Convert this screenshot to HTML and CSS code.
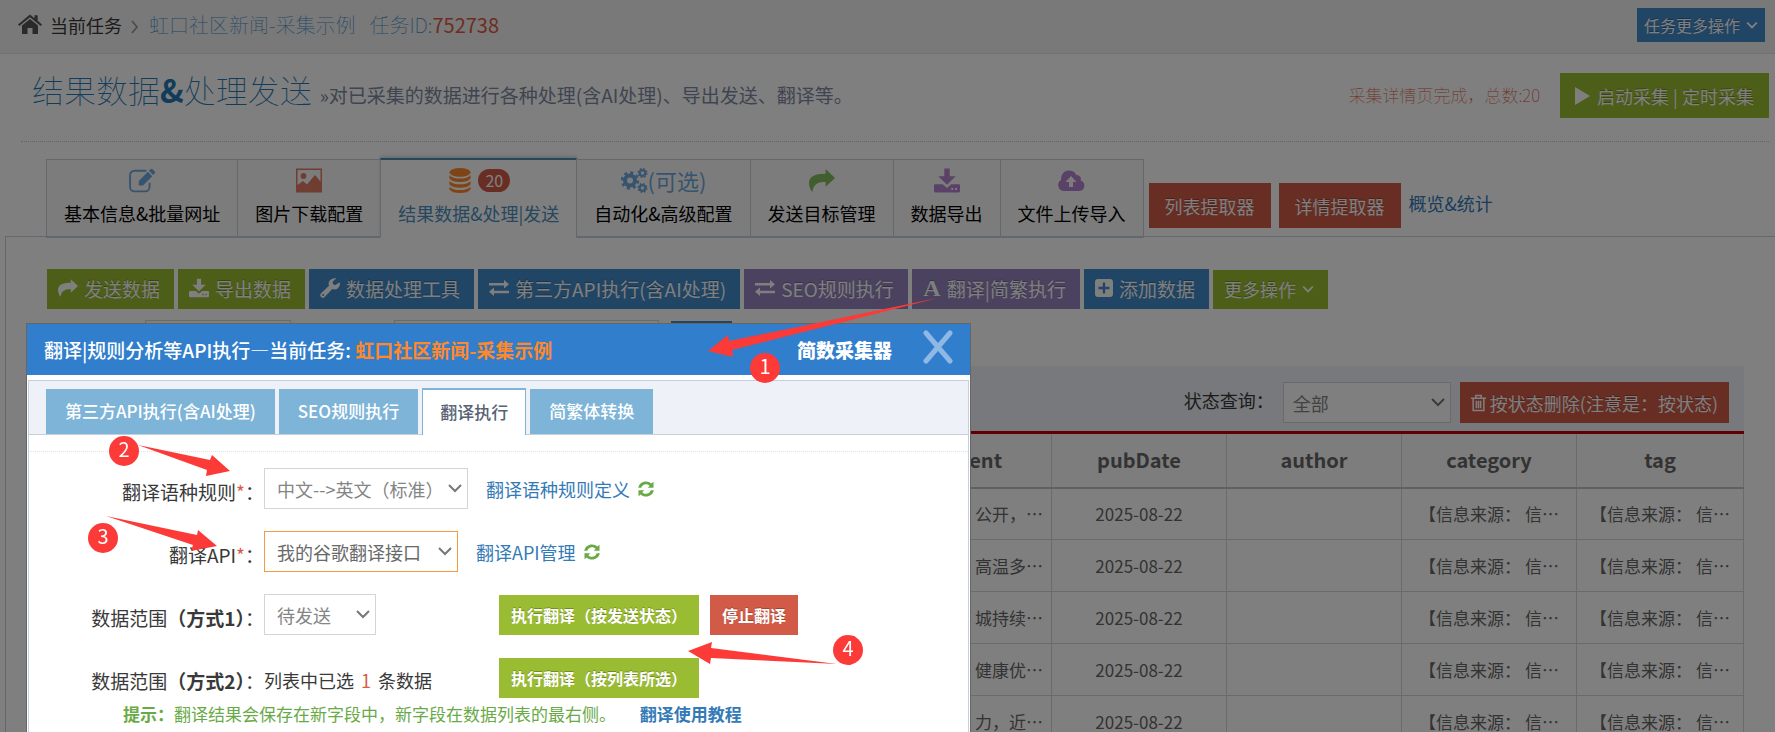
FILE: index.html
```html
<!DOCTYPE html>
<html lang="zh-CN">
<head>
  <meta charset="UTF-8">
  <title>结果数据&amp;处理发送</title>
  <link rel="stylesheet" href="styles.css">
</head>
<body>
  <!-- 图标 -->
  <svg class="sprite" aria-hidden="true">
    <symbol id="i-home" viewBox="0 0 24 20"><path d="M12 4.500 20 11v8.500h-5.500v-6h-5v6H4V11zM12 0l4.500 3.700V.8h3.200v5.500L24 10l-1.300 1.500L12 2.800 1.300 11.500 0 10z"/></symbol>
    <symbol id="i-edit" viewBox="0 0 24 22"><path d="M16 2H5a4 4 0 0 0-4 4v11a4 4 0 0 0 4 4h10a4 4 0 0 0 4-4v-4" fill="none" stroke="currentColor" stroke-width="1.700"/><path d="M9 11.500 17.500 3l4 4-8.500 8.500H9zM18.400 2.100 20 .5q.9-.7 1.800.1l2 2q.7.9 0 1.700L22.300 6z"/></symbol>
    <symbol id="i-image" viewBox="0 0 26 24"><path fill-rule="evenodd" d="M0 0h26v24H0zM1.500 1.500v15L7 12.500l4 3.500 8-9.500 5.500 6.500V1.500z"/><circle cx="7.500" cy="7.500" r="2.900"/></symbol>
    <symbol id="i-db" viewBox="0 0 22 26"><ellipse cx="11" cy="4.500" rx="11" ry="4.500"/><path d="M0 7.500q3.500 3.500 11 3.500t11-3.500v3.300q-3 3.700-11 3.700T0 10.800zM0 13.500q3.500 3.500 11 3.500t11-3.500v3.300q-3 3.700-11 3.700T0 16.800zM0 19.500q3.500 3.500 11 3.500t11-3.500v2.800Q19 26 11 26T0 22.300z"/></symbol>
    <symbol id="i-gears" viewBox="0 0 27 25"><g fill="none" stroke="currentColor"><circle cx="9" cy="12.500" r="5" stroke-width="4"/><circle cx="9" cy="12.500" r="7.900" stroke-width="2.600" stroke-dasharray="3.100 3.100"/><circle cx="21.500" cy="5" r="2.800" stroke-width="2.200"/><circle cx="21.500" cy="5" r="4.300" stroke-width="1.500" stroke-dasharray="1.700 1.700"/><circle cx="21.500" cy="20" r="2.800" stroke-width="2.200"/><circle cx="21.500" cy="20" r="4.300" stroke-width="1.500" stroke-dasharray="1.700 1.700"/></g></symbol>
    <symbol id="i-share" viewBox="0 0 25 22"><path d="M16 0l9 8.500-9 8.500v-4.500C9 12.300 4.500 14 3.200 22 1.500 20.500 0 16.500 0 13.500 0 7 6 4.300 16 4.500z"/></symbol>
    <symbol id="i-download" viewBox="0 0 24 22"><path fill-rule="evenodd" d="M9.500 0h5v7H20l-8 8-8-8h5.500zM1 14.500h7l4 3.500 4-3.500h7q1 0 1 1V21q0 1-1 1H1q-1 0-1-1v-5.500q0-1 1-1zM16 18v1.700h1.700V18zm3.500 0v1.700h1.700V18z"/></symbol>
    <symbol id="i-cloud" viewBox="0 0 27 21"><path fill-rule="evenodd" d="M6 21a6 6 0 0 1-2.800-11.200A8 8 0 0 1 18.300 5a4 4 0 0 1 4.300 5.500A5.400 5.400 0 0 1 21.500 21zM13 6l-5.500 6H11v5h4v-5h3.500z"/></symbol>
    <symbol id="i-wrench" viewBox="0 0 20 20"><path fill-rule="evenodd" d="M19.700 4.200q1 3.500-1.700 6-2.700 2-5.800.9L4.700 19q-1.700 1.700-3.500.1-2-1.900-.1-3.800L9 7.800Q7.800 4.700 10.200 2 13-.6 16.500.5L12.800 3.200v2.500l2.200 1.500zM3.200 16a1 1 0 1 0 0 2 1 1 0 0 0 0-2z"/></symbol>
    <symbol id="i-exchange" viewBox="0 0 20 16"><path d="M0 3h15V0l5 4.200-5 4.200V5.500H0zM20 13.200H5V16l-5-4.200L5 7.600v3.100h15z"/></symbol>
    <symbol id="i-plus" viewBox="0 0 18 18"><path fill-rule="evenodd" d="M3 0h12q3 0 3 3v12q0 3-3 3H3q-3 0-3-3V3q0-3 3-3zM7.800 3.500v4.300H3.500v2.400h4.300v4.300h2.400v-4.300h4.300V7.800h-4.300V3.500z"/></symbol>
    <symbol id="i-trash" viewBox="0 0 14 16"><path d="M0 3.500h14M4.500 3V1h5v2M2 4v11h10V4M5 6v7M7 6v7M9 6v7" fill="none" stroke="currentColor" stroke-width="1.400"/></symbol>
    <symbol id="i-refresh" viewBox="0 0 16 16"><path d="M.2 6.800C1 2.900 4 .5 8 .5c2.100 0 4 .8 5.300 2.100L15.500.8v6H9.700l2-2C10.700 3.700 9.500 3.200 8 3.200c-2.200 0-4 1.300-4.700 3.600zM15.800 9.200C15 13.100 12 15.500 8 15.500c-2.100 0-4-.8-5.300-2.100L.5 15.200v-6h5.800l-2 2c1 1.100 2.200 1.600 3.700 1.600 2.200 0 4-1.300 4.700-3.600z"/></symbol>
    <symbol id="i-down" viewBox="0 0 10 10"><path d="M1 3l4 4 4-4" fill="none" stroke="currentColor" stroke-width="1.500"/></symbol>
    <symbol id="i-right" viewBox="0 0 8 14"><path d="M1 1l5 6-5 6" fill="none" stroke="currentColor" stroke-width="1.800"/></symbol>
    <symbol id="i-play" viewBox="0 0 15 18"><path d="M0 0l15 9-15 9z"/></symbol>
    <symbol id="i-close" viewBox="0 0 30 34"><path d="M3 3l24 28M27 3L3 31" stroke="currentColor" stroke-width="5" stroke-linecap="round"/></symbol>
  </svg>

  <div class="page">
    <div class="topbar">
      <svg class="home"><use href="#i-home"/></svg>
      <span class="crumb">当前任务</span>
      <svg class="sep"><use href="#i-right"/></svg>
      <span class="task">虹口社区新闻-采集示例</span>
      <span class="task-id">任务ID:<b>752738</b></span>
      <button class="btn primary small" type="button">任务更多操作 <svg class="caret"><use href="#i-down"/></svg></button>
    </div>

    <div class="page-header">
      <h1>结果数据<b>&amp;</b>处理发送</h1>
      <span class="sub">»对已采集的数据进行各种处理(含AI处理)、导出发送、翻译等。</span>
      <span class="status">采集详情页完成，总数:20</span>
      <button class="btn success start" type="button"><svg class="play"><use href="#i-play"/></svg>启动采集 | 定时采集</button>
    </div>

    <div class="tabs-row">
      <nav class="tabs">
        <a href="#"><span class="ico blue"><svg class="i24"><use href="#i-edit"/></svg></span>基本信息&amp;批量网址</a>
        <a href="#"><span class="ico pink"><svg class="i24"><use href="#i-image"/></svg></span>图片下载配置</a>
        <a href="#" class="active"><span class="ico orange"><svg class="i24"><use href="#i-db"/></svg><span class="badge">20</span></span>结果数据&amp;处理|发送</a>
        <a href="#"><span class="ico blue"><svg class="i27"><use href="#i-gears"/></svg>(可选)</span>自动化&amp;高级配置</a>
        <a href="#"><span class="ico green"><svg class="i24"><use href="#i-share"/></svg></span>发送目标管理</a>
        <a href="#"><span class="ico purple"><svg class="i24"><use href="#i-download"/></svg></span>数据导出</a>
        <a href="#"><span class="ico purple"><svg class="i27"><use href="#i-cloud"/></svg></span>文件上传导入</a>
      </nav>
      <div class="extra">
        <button class="btn danger big" type="button">列表提取器</button>
        <button class="btn danger big" type="button">详情提取器</button>
        <a href="#">概览&amp;统计</a>
      </div>
    </div>

    <div class="panel">
      <div class="toolbar">
        <button class="btn success" type="button"><svg class="i20"><use href="#i-share"/></svg>发送数据</button>
        <button class="btn success" type="button"><svg class="i20"><use href="#i-download"/></svg>导出数据</button>
        <button class="btn primary" type="button"><svg class="i20"><use href="#i-wrench"/></svg>数据处理工具</button>
        <button class="btn primary" type="button"><svg class="i20"><use href="#i-exchange"/></svg>第三方API执行(含AI处理)</button>
        <button class="btn purple-bg" type="button"><svg class="i20"><use href="#i-exchange"/></svg>SEO规则执行</button>
        <button class="btn purple-bg" type="button"><span class="font-a">A</span>翻译|简繁执行</button>
        <button class="btn primary" type="button"><svg class="i18"><use href="#i-plus"/></svg>添加数据</button>
        <button class="btn success more" type="button">更多操作 <svg class="caret"><use href="#i-down"/></svg></button>
      </div>

      <form class="search">
        <input class="q-field" type="text" aria-label="字段">
        <input class="q-word" type="text" aria-label="关键词">
        <button class="btn primary" type="button" aria-label="查询"></button>
      </form>

      <div class="grid-box">
        <div class="grid-tools">
          <label for="state">状态查询：</label>
          <select id="state"><option>全部</option></select>
          <button class="btn danger del" type="button"><svg class="trash"><use href="#i-trash"/></svg>按状态删除(注意是：按状态)</button>
        </div>
        <table>
          <colgroup><col><col class="c"><col class="c"><col class="c"><col class="c"><col class="t"></colgroup>
          <thead>
            <tr><th></th><th>content</th><th>pubDate</th><th>author</th><th>category</th><th>tag</th></tr>
          </thead>
          <tbody>
            <tr><td></td><td class="r">公开，⋯</td><td>2025-08-22</td><td></td><td>【信息来源： 信⋯</td><td>【信息来源： 信⋯</td></tr>
            <tr><td></td><td class="r">高温多⋯</td><td>2025-08-22</td><td></td><td>【信息来源： 信⋯</td><td>【信息来源： 信⋯</td></tr>
            <tr><td></td><td class="r">城持续⋯</td><td>2025-08-22</td><td></td><td>【信息来源： 信⋯</td><td>【信息来源： 信⋯</td></tr>
            <tr><td></td><td class="r">健康优⋯</td><td>2025-08-22</td><td></td><td>【信息来源： 信⋯</td><td>【信息来源： 信⋯</td></tr>
            <tr><td></td><td class="r">力，近⋯</td><td>2025-08-22</td><td></td><td>【信息来源： 信⋯</td><td>【信息来源： 信⋯</td></tr>
          </tbody>
        </table>
      </div>
    </div>
  </div>

  <div class="mask"></div>

  <!-- 弹窗 -->
  <div class="modal">
    <div class="modal-head">
      <span>翻译|规则分析等API执行—当前任务: <b>虹口社区新闻-采集示例</b></span>
      <strong>简数采集器</strong>
      <button type="button" class="close" aria-label="关闭"><svg><use href="#i-close"/></svg></button>
    </div>
    <div class="modal-body">
      <nav class="subtabs">
        <a href="#">第三方API执行(含AI处理)</a>
        <a href="#">SEO规则执行</a>
        <a href="#" class="active">翻译执行</a>
        <a href="#">简繁体转换</a>
      </nav>
      <form class="form">
        <label for="rule">翻译语种规则<i>*</i>：</label>
        <div class="ctl">
          <select id="rule" class="w-rule"><option>中文--&gt;英文（标准）</option></select>
          <a href="#">翻译语种规则定义<svg class="refresh"><use href="#i-refresh"/></svg></a>
        </div>
        <label for="api">翻译API<i>*</i>：</label>
        <div class="ctl">
          <select id="api" class="w-api"><option>我的谷歌翻译接口</option></select>
          <a href="#">翻译API管理<svg class="refresh"><use href="#i-refresh"/></svg></a>
        </div>
        <label for="range">数据范围<b>（方式1）</b>：</label>
        <div class="ctl">
          <div class="first"><select id="range" class="w-range"><option>待发送</option></select></div>
          <button class="btn success run" type="button">执行翻译（按发送状态）</button>
          <button class="btn danger run" type="button">停止翻译</button>
        </div>
        <span class="label">数据范围<b>（方式2）</b>：</span>
        <div class="ctl">
          <div class="first picked">列表中已选 <em>1</em> 条数据</div>
          <button class="btn success run" type="button">执行翻译（按列表所选）</button>
        </div>
      </form>
      <p class="hint"><b>提示：</b>翻译结果会保存在新字段中，新字段在数据列表的最右侧。 <a href="#">翻译使用教程</a></p>
    </div>
  </div>

  <!-- 步骤标注 -->
  <svg class="steps" width="1775" height="732">
    <path d="M938 298 729 341 728 335 708 351 733 357 732 350z"/>
    <path d="M138 445 210 460 212 455 230 471 206 476 207 470z"/>
    <path d="M106 516 197 535 198 530 217 546 191 551 193 545z"/>
    <path d="M837 664 711 648 712 642 688 651 710 664 711 658z"/>
    <circle cx="765" cy="368" r="15"/>
    <circle cx="124" cy="451" r="15"/>
    <circle cx="103" cy="538" r="15"/>
    <circle cx="848" cy="650" r="15"/>
    <text x="765" y="374">1</text>
    <text x="124" y="457">2</text>
    <text x="103" y="544">3</text>
    <text x="848" y="656">4</text>
  </svg>
</body>
</html>
```
FILE: styles.css
```css
* {
  box-sizing: border-box;
}
body {
  margin: 0;
  height: 100vh;
  overflow: hidden;
  background: #fff;
  color: #393939;
  font-family: "Noto Sans CJK SC", "Noto Sans", sans-serif;
  font-size: 18px;
  line-height: 24px;
}
a {
  color: #337ab7;
  text-decoration: none;
}
svg {
  fill: currentColor;
  flex-shrink: 0;
}
button, select, input {
  font-family: inherit;
  margin: 0;
}
select, input {
  height: 41px;
  border: 1px solid #d5d5d5;
  border-radius: 0;
  background: #fff;
  color: #858585;
  font-size: 18px;
  padding: 0 12px;
}
select {
  appearance: none;
  padding-right: 20px;
  background: #fff url("data:image/svg+xml,%3Csvg xmlns='http://www.w3.org/2000/svg' width='14' height='9'%3E%3Cpath d='M1 1l6 6 6-6' fill='none' stroke='%23777' stroke-width='2'/%3E%3C/svg%3E") no-repeat right 5px center;
}
.sprite {
  position: absolute;
  width: 0;
  height: 0;
}
.i18 { width: 18px; height: 18px; }
.i20 { width: 20px; height: 20px; }
.i24 { width: 26px; height: 25px; }
.i27 { width: 27px; height: 25px; }

/* 按钮 */
.btn {
  display: flex;
  align-items: center;
  justify-content: center;
  gap: 6px;
  height: 40px;
  padding: 0 10px 2px;
  border: 0;
  color: #fff;
  font-size: 19px;
  white-space: nowrap;
  text-shadow: 0 -1px 0 rgba(0, 0, 0, .25);
  cursor: pointer;
}
.success { background: #9abc32; }
.primary { background: #428bca; }
.danger { background: #d15b47; }
.purple-bg { background: #9585bf; }
.caret {
  width: 12px;
  height: 12px;
}

/* 顶部 */
.topbar {
  display: flex;
  align-items: center;
  height: 54px;
  padding: 0 10px 4px 18px;
  background: #f2f2f2;
  border-bottom: 1px solid #e2e2e2;
}
.home {
  width: 24px;
  height: 21px;
  margin-right: 8px;
  color: #555;
}
.sep {
  width: 8px;
  height: 14px;
  margin: 4px 10px 0 9px;
  color: #999;
}
.task, .task-id {
  font-size: 20px;
  font-weight: 100;
  color: #478fca;
}
.task-id {
  margin-left: 14px;
}
.task-id b {
  font-weight: 400;
  color: #dd5a43;
}
.small {
  margin-left: auto;
  height: 34px;
  padding: 0 7px;
  font-size: 16px;
}
.page-header {
  display: flex;
  align-items: center;
  height: 88px;
  margin: 0 6px 0 21px;
  padding: 0 0 4px 11px;
  border-bottom: 1px dotted #cbcbcb;
}
h1 {
  margin: 0 8px 14px 0;
  font-size: 32px;
  line-height: 40px;
  font-weight: 100;
  color: #2679b5;
}
h1 b {
  font-weight: 700;
}
.sub {
  margin-bottom: 2px;
  font-size: 19px;
  color: #8089a0;
}
.status {
  margin: 0 20px 2px auto;
  font-size: 17px;
  font-weight: 100;
  color: #dd5a43;
}
.start {
  height: 45px;
  padding: 0 15px;
  font-size: 18px;
}
.play {
  width: 15px;
  height: 18px;
  margin-right: 1px;
}

/* 主标签 */
.tabs-row {
  display: flex;
  align-items: flex-end;
  padding: 16px 0 0 46px;
  margin-bottom: -2px;
  position: relative;
}
.tabs {
  display: flex;
  align-items: flex-end;
}
.tabs a {
  display: flex;
  flex-direction: column;
  align-items: center;
  height: 79px;
  padding: 6px 17px 0;
  border: 1px solid #c5d0dc;
  border-right-width: 0;
  border-bottom-width: 2px;
  background: #f9f9f9;
  color: #000;
  white-space: nowrap;
}
.tabs a:last-child {
  border-right-width: 1px;
}
.tabs a.active {
  height: 80px;
  border-top: 2px solid #4c8fbd;
  border-bottom-color: #fff;
  border-right-width: 1px;
  margin-right: -1px;
  background: #fff;
  color: #4c8fbd;
  box-shadow: 0 -2px 3px rgba(0, 0, 0, .15);
}
.ico {
  display: flex;
  align-items: center;
  gap: 5px;
  height: 28px;
  margin-bottom: 7px;
  font-size: 22px;
}
.ico:has(.i27) {
  gap: 0;
}
.blue { color: #6fa8dc; }
.pink { color: #e07a66; }
.orange { color: #ff892a; }
.green { color: #83bd5f; }
.purple { color: #b583cf; }
.badge {
  padding: 0 7px;
  border-radius: 12px;
  background: #d15b47;
  color: #fff;
  font-size: 16px;
  line-height: 23px;
}
.extra {
  display: flex;
  align-items: center;
  gap: 8px;
  margin: 0 0 10px 5px;
}
.extra a {
  margin-bottom: 5px;
}
.big {
  height: 45px;
  padding: 0 16px;
  font-size: 18px;
}

/* 内容区 */
.panel {
  margin-left: 5px;
  padding: 32px 31px 0 41px;
  border: 1px solid #c5d0dc;
  border-width: 1px 0 0 1px;
}
.toolbar {
  display: flex;
  align-items: flex-end;
  gap: 4px;
}
.toolbar .btn {
  padding: 0 14px 2px 11px;
}
.toolbar .more {
  height: 39px;
  font-size: 18px;
}
.font-a {
  width: 18px;
  font-family: "Liberation Serif", serif;
  font-size: 24px;
  font-weight: 700;
}
.search {
  display: flex;
  align-items: center;
  gap: 12px;
  margin: 11px 0 5px 98px;
}
.q-field {
  width: 146px;
  margin-right: 91px;
}
.q-word {
  width: 265px;
}
.search .btn {
  width: 61px;
}
.grid-tools {
  display: flex;
  align-items: center;
  justify-content: flex-end;
  height: 65px;
  padding: 8px 15px 0 0;
  background: #eff3f8;
}
.grid-tools label {
  margin-bottom: 6px;
}
.grid-tools select {
  width: 168px;
  margin: 0 9px;
  padding-left: 9px;
}
.grid-tools .del {
  height: 41px;
  padding: 0 11px;
  font-size: 18px;
  gap: 4px;
}
.trash {
  width: 15px;
  height: 18px;
}
table {
  width: 100%;
  table-layout: fixed;
  border-collapse: collapse;
  border: 1px solid #bbb;
  border-top: 3px solid #c00000;
}
.c { width: 175px; }
.t { width: 167px; }
th, td {
  height: 52px;
  padding: 0 8px;
  border: 1px solid #d6d6d6;
  text-align: center;
  white-space: nowrap;
  overflow: hidden;
}
th {
  height: 55px;
  border-bottom: 2px solid #c0c0c0;
  background: #fafafa;
  color: #666;
  font-size: 20px;
}
td {
  color: #666;
  font-size: 17px;
}
td.r {
  text-align: right;
}

/* 遮罩和弹窗 */
.mask {
  position: fixed;
  inset: 0;
  background: rgba(0, 0, 0, .5);
}
.modal {
  position: fixed;
  top: 323px;
  left: 26px;
  bottom: 0;
  width: 945px;
  border: 1px solid #666;
  border-bottom: 0;
  background: #fff;
}
.modal-head {
  display: flex;
  align-items: center;
  height: 51px;
  padding: 0 17px;
  background: #307ecc;
  color: #fff;
  font-size: 19px;
  font-weight: 500;
}
.modal-head b {
  color: #ff892a;
}
.modal-head strong {
  margin-left: auto;
  font-weight: 900;
}
.close {
  width: 30px;
  height: 34px;
  margin: 0 0 5px 31px;
  padding: 0;
  border: 0;
  background: none;
  color: #8fb8e4;
}
.close svg {
  width: 30px;
  height: 34px;
}
.modal-body {
  height: 100%;
  margin: 5px 1px 0;
  border: 1px solid #c5d0dc;
}
.subtabs {
  display: flex;
  align-items: flex-end;
  gap: 4px;
  height: 54px;
  padding-left: 17px;
  background: #eef2f8;
  border-bottom: 1px solid #c5d0dc;
}
.subtabs a {
  height: 45px;
  padding: 0 19px;
  line-height: 44px;
  background: #7db4d8;
  color: #fff;
  font-size: 17px;
  font-weight: 500;
  white-space: nowrap;
}
.subtabs a.active {
  height: 47px;
  margin-bottom: -1px;
  padding: 0 17px;
  border: 1px solid #7db4d8;
  border-width: 2px 1px 0;
  background: #fff;
  color: #576373;
}
.form {
  display: grid;
  grid-template-columns: 235px 1fr;
  row-gap: 22px;
  margin-top: 16px;
  padding-top: 16px;
  border-top: 1px dotted #e2e2e2;
}
.form label, .form .label {
  padding-top: 7px;
  line-height: 33px;
  font-size: 19px;
  text-align: right;
}
.form i {
  font-style: normal;
  color: #dd5a43;
}
.ctl {
  display: flex;
  align-items: center;
  height: 41px;
}
.ctl a {
  display: flex;
  align-items: center;
  gap: 8px;
  margin-left: 18px;
}
.refresh {
  width: 16px;
  height: 16px;
  color: #69aa46;
}
.w-rule { width: 204px; }
.w-api {
  width: 194px;
  border-color: #f59942;
  color: #696969;
}
.w-range { width: 112px; }
.first {
  width: 235px;
}
.picked {
  padding-top: 4px;
}
.first em {
  margin: 0 3px;
  font-style: normal;
  color: #dd5a43;
}
.run {
  padding: 0 12px;
  margin-right: 11px;
  font-size: 16px;
  font-weight: 700;
}
.hint {
  margin: 4px 0 0 94px;
  color: #69aa46;
  font-size: 17px;
}
.hint a {
  margin-left: 20px;
  font-weight: 700;
}

/* 标注 */
.steps {
  position: fixed;
  top: 0;
  left: 0;
  fill: #fc3a38;
  pointer-events: none;
}
.steps text {
  fill: #fff;
  font-size: 20px;
  text-anchor: middle;
}
```
